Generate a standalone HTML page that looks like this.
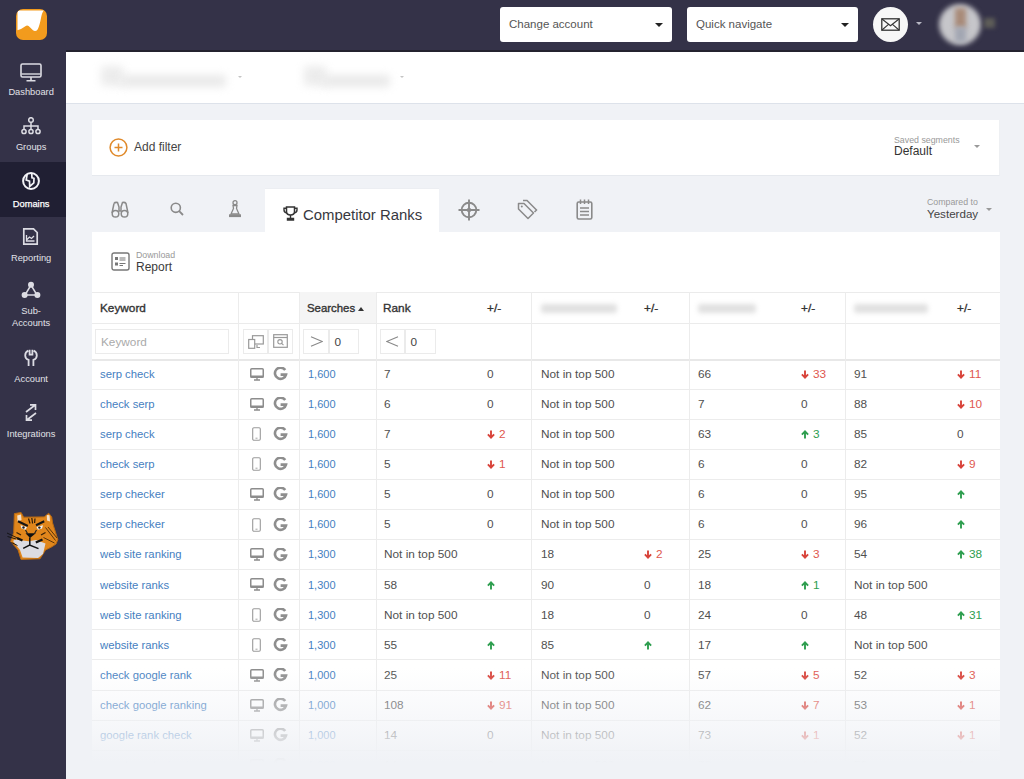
<!DOCTYPE html>
<html><head><meta charset="utf-8">
<style>
*{box-sizing:border-box;margin:0;padding:0}
html,body{width:1024px;height:779px;overflow:hidden}
body{position:relative;background:#f0f2f6;font-family:"Liberation Sans",sans-serif;color:#444}
.abs{position:absolute}
#hdr{position:absolute;left:0;top:0;width:1024px;height:52px;background:#343248}
#side{position:absolute;left:0;top:0;width:66px;height:779px;background:#343248}
.logo{position:absolute;left:16px;top:8.5px;width:30.5px;height:31px;border-radius:7px;background:#f29b1d;overflow:hidden}
.nav{position:absolute;left:0;width:66px;color:#e2e2e8;font-size:9px;text-align:center}
.nav .t{position:absolute;left:0;width:62.3px;font-size:9.3px;text-align:center;line-height:10px}
.nav svg{position:absolute}
.sel{position:absolute;top:7px;height:35px;background:#fff;border-radius:3px;color:#555;font-size:11.5px}
.sel .t{position:absolute;left:9px;top:10px;line-height:14px}
.caret{position:absolute;width:0;height:0;border-left:4px solid transparent;border-right:4px solid transparent;border-top:4px solid #222}
#topbar{position:absolute;left:66px;top:52px;width:958px;height:52px;background:#fff;border-bottom:1px solid #dde2ea}
.blur{position:absolute;background:#e6e6e6;filter:blur(4px);border-radius:3px}
.card{position:absolute;background:#fff}
.tabic{position:absolute}
.c{position:absolute;top:6.4px;font-size:11.8px;line-height:16px;white-space:nowrap;color:#505050}
.kw{color:#4580bf;font-size:11.3px}
.sr{color:#4580bf;font-size:11px}
.dn .pmn{color:#e0584f}
.upc .pmn{color:#2e9e4f}
.c .ar{position:relative;top:0px;margin-right:4px;vertical-align:-1px}
.row{position:absolute;left:92px;width:908px;height:30.1px;border-bottom:1px solid #ececec}
.row .c,.row .ic{margin-left:-92px}
.ic{position:absolute}
.vb{position:absolute;top:292px;width:1px;height:500px;background:#ececec}
.th{position:absolute;top:300px;font-size:11.8px;font-weight:normal;-webkit-text-stroke:0.35px #333;color:#333;line-height:16px}
.inp{position:absolute;top:329px;height:25px;border:1px solid #ebebeb;background:#fff}
#fade{position:absolute;left:66px;top:660px;width:958px;height:119px;background:linear-gradient(to bottom,rgba(240,242,246,0) 0px,rgba(240,242,246,0) 8px,rgba(240,242,246,0.38) 45px,rgba(240,242,246,0.7) 75px,rgba(240,242,246,0.95) 96px,rgba(240,242,246,1) 103px)}
</style></head><body>

<div id="hdr"></div>
<div id="side">
  <div class="logo">
    <svg width="31" height="32" viewBox="0 0 31 32"><path d="M1.5 3.5Q1.5 1.5 3.5 1.5H27.8Q26.2 3 25.2 8Q23.8 16 21.8 20.2Q19.6 23.2 17 21.3Q14.6 18.8 12.6 17Q11 16 9 17.5Q5 20.5 1.5 21.2Z" fill="#fff"/></svg>
  </div>
  <!-- Dashboard -->
  <div class="nav" style="top:52px;height:55px">
    <svg style="left:20px;top:11px" width="22" height="19" viewBox="0 0 22 19"><rect x="1" y="1" width="20" height="13" rx="1.5" fill="none" stroke="#dcdce3" stroke-width="1.6"/><path d="M1.5 11H20.5" stroke="#dcdce3" stroke-width="1.4"/><path d="M11 14V17.5M6.5 17.8H15.5" stroke="#dcdce3" stroke-width="1.6"/></svg>
    <div class="t" style="top:35px">Dashboard</div>
  </div>
  <!-- Groups -->
  <div class="nav" style="top:107px;height:55px">
    <svg style="left:21px;top:10px" width="20" height="18" viewBox="0 0 20 18"><circle cx="10" cy="3" r="2.3" fill="none" stroke="#dcdce3" stroke-width="1.5"/><path d="M10 5.3V9M3 12.5V9H17V12.5M10 9V12.5" fill="none" stroke="#dcdce3" stroke-width="1.5"/><circle cx="3" cy="14.5" r="2.1" fill="none" stroke="#dcdce3" stroke-width="1.5"/><circle cx="10" cy="14.5" r="2.1" fill="none" stroke="#dcdce3" stroke-width="1.5"/><circle cx="17" cy="14.5" r="2.1" fill="none" stroke="#dcdce3" stroke-width="1.5"/></svg>
    <div class="t" style="top:35px">Groups</div>
  </div>
  <!-- Domains active -->
  <div class="nav" style="top:162px;height:55px;background:#201f33;color:#fff">
    <svg style="left:21px;top:9.2px" width="20" height="20" viewBox="0 0 20 20"><circle cx="10" cy="10" r="7.9" fill="none" stroke="#f4f4f8" stroke-width="2"/><path d="M6.2 2.8L5.2 9L8.5 10.2L8.7 15.5L12.8 11.8L13 7.3L11 6.8L10.7 2.5" fill="none" stroke="#f4f4f8" stroke-width="1.7" stroke-linejoin="miter"/></svg>
    <div class="t" style="top:37px;-webkit-text-stroke:0.25px #fff">Domains</div>
  </div>
  <!-- Reporting -->
  <div class="nav" style="top:217px;height:55px">
    <svg style="left:22px;top:10px" width="17" height="19" viewBox="0 0 17 19"><path d="M1.8 1.8H11.5L15.2 5.5V17.2H1.8Z" fill="none" stroke="#dcdce3" stroke-width="1.7"/><path d="M4.5 8V14H12.5M5 12.5L7.5 10L9.5 11.5L12 9" fill="none" stroke="#dcdce3" stroke-width="1.3"/></svg>
    <div class="t" style="top:35.5px">Reporting</div>
  </div>
  <!-- Sub-Accounts -->
  <div class="nav" style="top:272px;height:67px">
    <svg style="left:21px;top:9px" width="20" height="18" viewBox="0 0 20 18"><path d="M10 4L4 14H16Z" fill="none" stroke="#dcdce3" stroke-width="1.5"/><circle cx="10" cy="3.8" r="3" fill="#dcdce3"/><circle cx="3.6" cy="14" r="3" fill="#dcdce3"/><circle cx="16.4" cy="14" r="3" fill="#dcdce3"/></svg>
    <div class="t" style="top:34px">Sub-</div>
    <div class="t" style="top:46px">Accounts</div>
  </div>
  <!-- Account -->
  <div class="nav" style="top:339px;height:55px">
    <svg style="left:24px;top:10px" width="14" height="18" viewBox="0 0 14 18"><path d="M4.3 1.6Q1.2 3 1.2 6.5Q1.2 9.8 4.6 10.9V17M9.7 1.6Q12.8 3 12.8 6.5Q12.8 9.8 9.4 10.9V17M5.6 0.8V5.6H8.4V0.8" fill="none" stroke="#dcdce3" stroke-width="1.8"/></svg>
    <div class="t" style="top:34.5px">Account</div>
  </div>
  <!-- Integrations -->
  <div class="nav" style="top:394px;height:55px">
    <svg style="left:22px;top:9px" width="18" height="19" viewBox="0 0 18 19"><path d="M4 9L13.5 1.8M8 1.8H13.5V7M14 10L4.5 17.2M10 17.2H4.5V12" fill="none" stroke="#dcdce3" stroke-width="1.7"/></svg>
    <div class="t" style="top:34.5px">Integrations</div>
  </div>
  <!-- tiger -->
  <svg style="position:absolute;left:4px;top:508px" width="58" height="58" viewBox="0 0 58 58">
    <path d="M10.4 5.6L17.1 4.5L19.7 9.2L40.2 8.9L44.7 5.2L47.7 8.9L48.6 15L53.8 31.5L52 36L47.5 39L41.5 42L36 50.8L17 51.4L14.1 42L6.7 33.5L9.7 24.6Z" fill="#e0861c" stroke="#b96a12" stroke-width="1"/>
    <path d="M11 31.5L24.6 33.2L32 32L41.5 35.5L39 46L34 50L18.6 49.5L16 42L9 33Z" fill="#dcdce2"/>
    <path d="M13.2 7.5L17 6.5L17.5 12L13.6 13.5Z" fill="#f4e2cc"/>
    <path d="M42.8 7L45.5 7.2L46 13.5L43 12.5Z" fill="#f4e2cc"/>
    <path d="M14 13.3L23.8 17.9M32 17.3L40.2 13.3" stroke="#151515" stroke-width="2.2"/>
    <path d="M16.5 17.2L23 19L21.5 21.8L17.5 20.5Z M39 17.2L32.5 19L34 21.8L38 20.5Z" fill="#f2f2f2"/>
    <circle cx="19.5" cy="19.5" r="1.2" fill="#222"/><circle cx="35.4" cy="19.6" r="1.2" fill="#222"/>
    <path d="M24.5 10.5L26 15.5M27.8 10L28.6 15.5M31 10.5L30.6 15" stroke="#2a1a0a" stroke-width="1.2"/>
    <path d="M21.5 25.3L31.8 25.3L26 30Z" fill="#111"/>
    <path d="M21.5 22L23.5 25.5M32.5 22L30.5 25.5" stroke="#222" stroke-width="1.2"/>
    <path d="M25.8 29.5V37.2M19.2 40.3L25.6 37L34.5 40.6" fill="none" stroke="#111" stroke-width="1.5"/>
    <path d="M13 30L18.5 32.5M31.8 34.5L38.5 31.5" stroke="#111" stroke-width="2.4"/>
    <path d="M3 25L13 29.8M3.5 28.5L12 31M7.5 34.5L13.5 37.5" stroke="#111" stroke-width="0.9"/>
    <path d="M41.5 19.5L51.5 32.5M44 19L53 30M39.5 29.5L50.5 35" stroke="#4a2a0a" stroke-width="0.9"/>
    <path d="M12.5 24.5L17 27M37 27L41.5 24.5" stroke="#3a2208" stroke-width="1.3"/>
  </svg>
</div>

<!-- header right -->
<div class="sel" style="left:500px;width:172px"><span class="t">Change account</span><span class="caret" style="left:155px;top:16px"></span></div>
<div class="sel" style="left:687px;width:171px"><span class="t">Quick navigate</span><span class="caret" style="left:154px;top:16px"></span></div>
<div class="abs" style="left:872.5px;top:6.5px;width:35px;height:35px;border-radius:50%;background:#f7f7f7"></div>
<svg class="abs" style="left:881px;top:18px" width="19" height="13" viewBox="0 0 19 13"><rect x="0.8" y="0.8" width="17.4" height="11.4" fill="none" stroke="#333" stroke-width="1.3"/><path d="M1 1L9.5 7.8L18 1M1 12L7.2 6.6M18 12L11.8 6.6" fill="none" stroke="#333" stroke-width="1.1"/></svg>
<span class="caret" style="left:916px;top:22px;border-top-color:#b8b8c4;border-left-width:3px;border-right-width:3px;border-top-width:3.5px"></span>
<div class="abs" style="left:939px;top:4px;width:42px;height:41px;border-radius:50%;background:#c6c6ca;filter:blur(2.8px)"></div>
<div class="abs" style="left:955px;top:8px;width:11px;height:20px;background:#a88a78;filter:blur(2.5px)"></div>
<div class="abs" style="left:955px;top:27px;width:11px;height:15px;background:#a2a6b2;filter:blur(2.5px)"></div>
<div class="abs" style="left:984px;top:18px;width:11px;height:10px;background:#5e5d58;filter:blur(2.2px)"></div>
<div class="abs" style="left:66px;top:50px;width:958px;height:2px;background:#24232f"></div>
<!-- top white bar -->
<div id="topbar"></div>
<div class="blur" style="left:101px;top:66px;width:22px;height:20px;background:#ececec"></div>
<div class="blur" style="left:120px;top:75px;width:106px;height:12px;background:#e9e9e9"></div>
<span class="caret" style="left:238px;top:76px;border-top-color:#c4c4c4;border-left-width:2.5px;border-right-width:2.5px;border-top-width:2.5px"></span>
<div class="blur" style="left:304px;top:66px;width:22px;height:20px;background:#ececec"></div>
<div class="blur" style="left:322px;top:75px;width:68px;height:12px;background:#e9e9e9"></div>
<span class="caret" style="left:400px;top:76px;border-top-color:#c4c4c4;border-left-width:2.5px;border-right-width:2.5px;border-top-width:2.5px"></span>

<!-- filter card -->
<div class="card" style="left:92px;top:120px;width:907.5px;height:56px;border-bottom:1px solid #e6e9ee;border-right:1px solid #eef0f3"></div>
<svg class="abs" style="left:109px;top:138px" width="19" height="19" viewBox="0 0 19 19"><circle cx="9.5" cy="9.5" r="8.4" fill="none" stroke="#e08a2b" stroke-width="1.5"/><path d="M9.5 5.5V13.5M5.5 9.5H13.5" stroke="#e08a2b" stroke-width="1.5"/></svg>
<span class="abs" style="left:134px;top:140px;font-size:12px;color:#444;line-height:14px">Add filter</span>
<span class="abs" style="left:894px;top:135px;font-size:8.8px;color:#999;line-height:10px">Saved segments</span>
<span class="abs" style="left:894px;top:144px;font-size:12px;color:#333;line-height:14px">Default</span>
<span class="caret" style="left:974px;top:145px;border-top-color:#999;border-left-width:3.5px;border-right-width:3.5px;border-top-width:3.5px"></span>

<!-- tabs -->
<svg class="tabic" style="left:111px;top:201px" width="18" height="17" viewBox="0 0 18 17"><path d="M3 2.5Q4 1 6.5 1.5L8 6V10H10V6L11.5 1.5Q14 1 15 2.5L17 12" fill="none" stroke="#8a8a8a" stroke-width="1.5"/><path d="M1 12L3 2.5" stroke="#8a8a8a" stroke-width="1.5"/><circle cx="4.5" cy="12.8" r="3.3" fill="none" stroke="#8a8a8a" stroke-width="1.5"/><circle cx="13.5" cy="12.8" r="3.3" fill="none" stroke="#8a8a8a" stroke-width="1.5"/></svg>
<svg class="tabic" style="left:170px;top:202px" width="14" height="14" viewBox="0 0 14 14"><circle cx="5.8" cy="5.8" r="4.6" fill="none" stroke="#8a8a8a" stroke-width="1.6"/><path d="M9.2 9.2L13 13" stroke="#8a8a8a" stroke-width="1.8"/></svg>
<svg class="tabic" style="left:228px;top:200px" width="14" height="18" viewBox="0 0 14 18"><circle cx="7" cy="2.7" r="2" fill="none" stroke="#8a8a8a" stroke-width="1.3"/><path d="M5 5.5H9L8.5 8.5L11 14H3L5.5 8.5Z" fill="none" stroke="#8a8a8a" stroke-width="1.3"/><rect x="1" y="14.3" width="12" height="2.8" fill="#8a8a8a"/></svg>
<div class="card" style="left:265px;top:188px;width:174px;height:50px;border-top:1px solid #eceef2"></div>
<svg class="abs" style="left:283px;top:206px" width="15" height="15" viewBox="0 0 15 15"><path d="M3.5 1H11.5V5.5Q11.5 9 7.5 9Q3.5 9 3.5 5.5Z" fill="none" stroke="#333" stroke-width="1.5"/><path d="M3.5 2.2H1V4Q1 6.5 4 7M11.5 2.2H14V4Q14 6.5 11 7M7.5 9V12M4.5 14H10.5V12.5H4.5Z" fill="none" stroke="#333" stroke-width="1.4"/></svg>
<span class="abs" style="left:303px;top:206.5px;font-size:14.9px;color:#383840;line-height:17px">Competitor Ranks</span>
<svg class="tabic" style="left:458px;top:199px" width="22" height="22" viewBox="0 0 22 22"><circle cx="11" cy="11" r="7.3" fill="none" stroke="#8a8a8a" stroke-width="1.9"/><path d="M11 0.5V21.5M0.5 11H21.5" stroke="#8a8a8a" stroke-width="1.9"/><circle cx="11" cy="11" r="2.2" fill="#8a8a8a"/></svg>
<svg class="tabic" style="left:517px;top:199px" width="21" height="22" viewBox="0 0 21 22"><path d="M1.5 4.5V10L11 19.5L16.5 14L7 4.5Z" fill="none" stroke="#8a8a8a" stroke-width="1.5" stroke-linejoin="round"/><circle cx="4.8" cy="7.6" r="1" fill="#8a8a8a"/><path d="M6 1.5H10L19.5 11L17.5 13" fill="none" stroke="#8a8a8a" stroke-width="1.5"/></svg>
<svg class="tabic" style="left:576px;top:199px" width="17" height="21" viewBox="0 0 17 21"><rect x="1.2" y="3" width="14.6" height="17" rx="1.5" fill="none" stroke="#8a8a8a" stroke-width="1.6"/><path d="M4.5 0.5V5M8.5 0.5V5M12.5 0.5V5M4 9H13M4 12.5H13M4 16H13" stroke="#8a8a8a" stroke-width="1.5"/></svg>
<span class="abs" style="left:927px;top:197px;font-size:8.8px;color:#999;line-height:10px">Compared to</span>
<span class="abs" style="left:927px;top:207px;font-size:11.6px;color:#444;line-height:14px">Yesterday</span>
<span class="caret" style="left:986px;top:208px;border-top-color:#999;border-left-width:3.5px;border-right-width:3.5px;border-top-width:3.5px"></span>

<!-- main card -->
<div class="card" style="left:92px;top:232px;width:908px;height:600px"></div>
<svg class="abs" style="left:111px;top:252px" width="19" height="19" viewBox="0 0 19 19"><rect x="1" y="1" width="17" height="17" rx="2" fill="none" stroke="#777" stroke-width="1.4"/><rect x="4" y="5" width="3" height="3" fill="#777"/><rect x="4" y="10.5" width="3" height="3" fill="#777"/><path d="M8.5 6H14.5M8.5 8H14.5M8.5 11.5H14.5M8.5 13.5H12" stroke="#777" stroke-width="1.2"/></svg>
<span class="abs" style="left:136px;top:250px;font-size:8.8px;color:#999;line-height:10px">Download</span>
<span class="abs" style="left:136px;top:260px;font-size:12px;color:#3b3b3b;line-height:14px">Report</span>

<!-- table header -->
<div class="abs" style="left:92px;top:291.5px;width:908px;height:1px;background:#ebebeb"></div>
<div class="abs" style="left:299px;top:292px;width:76.5px;height:31px;background:#f5f5f5"></div>
<div class="abs" style="left:92px;top:323px;width:908px;height:1px;background:#ebebeb"></div>
<div class="abs" style="left:92px;top:359px;width:908px;height:2px;background:#e8e8e8"></div>
<div class="vb" style="left:238px"></div><div class="vb" style="left:298.5px"></div><div class="vb" style="left:375.5px"></div><div class="vb" style="left:531px"></div><div class="vb" style="left:689px"></div><div class="vb" style="left:845px"></div>
<span class="th" style="left:100px">Keyword</span>
<span class="th" style="left:307px;font-size:11.4px">Searches</span>
<span class="caret" style="left:358px;top:307px;border-top:none;border-bottom:4px solid #333;border-left-width:3.5px;border-right-width:3.5px"></span>
<span class="th" style="left:383px">Rank</span>
<span class="th" style="left:487px">+/-</span>
<div class="blur" style="left:541px;top:304px;width:76px;height:9px;background:#e0e0e0;filter:blur(2.8px)"></div>
<span class="th" style="left:644px">+/-</span>
<div class="blur" style="left:698px;top:304px;width:58px;height:9px;background:#e0e0e0;filter:blur(2.8px)"></div>
<span class="th" style="left:801px">+/-</span>
<div class="blur" style="left:854px;top:304px;width:74px;height:9px;background:#e0e0e0;filter:blur(2.8px)"></div>
<span class="th" style="left:957px">+/-</span>

<!-- filter inputs -->
<div class="inp" style="left:95px;width:134px"><span class="abs" style="left:5px;top:4px;font-size:11.8px;color:#aaa;line-height:16px">Keyword</span></div>
<div class="inp" style="left:243px;width:25px"></div>
<div class="inp" style="left:268px;width:25px"></div>
<svg class="abs" style="left:248px;top:335px" width="16" height="14" viewBox="0 0 16 14"><rect x="4.5" y="0.7" width="10.8" height="8.3" fill="none" stroke="#999" stroke-width="1.2"/><rect x="0.7" y="4.5" width="6" height="8.8" fill="#fff" stroke="#999" stroke-width="1.2"/><path d="M9 10V12.5H12" stroke="#999" stroke-width="1.2" fill="none"/></svg>
<svg class="abs" style="left:273px;top:334px" width="15" height="14" viewBox="0 0 15 14"><rect x="0.7" y="0.7" width="13.6" height="12.6" fill="none" stroke="#999" stroke-width="1.2"/><path d="M0.7 3.5H14.3" stroke="#999" stroke-width="1.2"/><circle cx="7" cy="7.8" r="2.2" fill="none" stroke="#999" stroke-width="1.1"/><path d="M8.6 9.4L10.5 11.2" stroke="#999" stroke-width="1.1"/></svg>
<div class="inp" style="left:303px;width:26px"></div>
<div class="inp" style="left:328.5px;width:30.5px"><span class="abs" style="left:5px;top:4px;font-size:11.8px;color:#444;line-height:16px">0</span></div>
<svg class="abs" style="left:309.5px;top:336px" width="13" height="11" viewBox="0 0 13 11"><path d="M1 0.8L12.3 5.5L1 10.2" fill="none" stroke="#888" stroke-width="1.1"/></svg>
<div class="inp" style="left:380px;width:25px"></div>
<div class="inp" style="left:404.5px;width:31px"><span class="abs" style="left:5px;top:4px;font-size:11.8px;color:#444;line-height:16px">0</span></div>
<svg class="abs" style="left:386px;top:336px" width="13" height="11" viewBox="0 0 13 11"><path d="M12 0.8L0.7 5.5L12 10.2" fill="none" stroke="#888" stroke-width="1.1"/></svg>

<div class="row" style="top:359.50px"><span class="c kw" style="left:100px">serp check</span><span class="ic" style="left:250px;top:7px"><svg width="14" height="13" viewBox="0 0 14 13"><rect x="0.75" y="0.75" width="12.5" height="8.5" rx="1" fill="none" stroke="#8c8c8c" stroke-width="1.5"/><rect x="0.5" y="7.5" width="13" height="2.2" fill="#8c8c8c"/><path d="M7 9.5V11.6M4 12H10" stroke="#8c8c8c" stroke-width="1.3"/></svg></span><span class="ic" style="left:273px;top:7.5px"><svg width="15" height="14" viewBox="0 0 15 14"><path d="M12.2 3.1A5.6 5.6 0 1 0 13 7.6H7.6" fill="none" stroke="#8e8e8e" stroke-width="2.6"/></svg></span><span class="c sr" style="left:308px">1,600</span><span class="c" style="left:384px">7</span><span class="c" style="left:487px">0</span><span class="c" style="left:541px">Not in top 500</span><span class="c" style="left:698px">66</span><span class="c dn" style="left:801px"><svg class="ar" width="8" height="9" viewBox="0 0 8 9"><path d="M4 0.5V7.5M0.9 4.4L4 7.6L7.1 4.4" fill="none" stroke="#d8433a" stroke-width="1.9"/></svg><span class="pmn">33</span></span><span class="c" style="left:854px">91</span><span class="c dn" style="left:957px"><svg class="ar" width="8" height="9" viewBox="0 0 8 9"><path d="M4 0.5V7.5M0.9 4.4L4 7.6L7.1 4.4" fill="none" stroke="#d8433a" stroke-width="1.9"/></svg><span class="pmn">11</span></span></div>
<div class="row" style="top:389.60px"><span class="c kw" style="left:100px">check serp</span><span class="ic" style="left:250px;top:7px"><svg width="14" height="13" viewBox="0 0 14 13"><rect x="0.75" y="0.75" width="12.5" height="8.5" rx="1" fill="none" stroke="#8c8c8c" stroke-width="1.5"/><rect x="0.5" y="7.5" width="13" height="2.2" fill="#8c8c8c"/><path d="M7 9.5V11.6M4 12H10" stroke="#8c8c8c" stroke-width="1.3"/></svg></span><span class="ic" style="left:273px;top:7.5px"><svg width="15" height="14" viewBox="0 0 15 14"><path d="M12.2 3.1A5.6 5.6 0 1 0 13 7.6H7.6" fill="none" stroke="#8e8e8e" stroke-width="2.6"/></svg></span><span class="c sr" style="left:308px">1,600</span><span class="c" style="left:384px">6</span><span class="c" style="left:487px">0</span><span class="c" style="left:541px">Not in top 500</span><span class="c" style="left:698px">7</span><span class="c" style="left:801px">0</span><span class="c" style="left:854px">88</span><span class="c dn" style="left:957px"><svg class="ar" width="8" height="9" viewBox="0 0 8 9"><path d="M4 0.5V7.5M0.9 4.4L4 7.6L7.1 4.4" fill="none" stroke="#d8433a" stroke-width="1.9"/></svg><span class="pmn">10</span></span></div>
<div class="row" style="top:419.70px"><span class="c kw" style="left:100px">serp check</span><span class="ic" style="left:252px;top:7.5px"><svg width="9" height="14" viewBox="0 0 9 14"><rect x="0.7" y="0.7" width="7.6" height="12.6" rx="1.2" fill="none" stroke="#9a9a9a" stroke-width="1.1"/><path d="M3.5 11.2H5.5" stroke="#9a9a9a" stroke-width="0.9"/></svg></span><span class="ic" style="left:273px;top:7.5px"><svg width="15" height="14" viewBox="0 0 15 14"><path d="M12.2 3.1A5.6 5.6 0 1 0 13 7.6H7.6" fill="none" stroke="#8e8e8e" stroke-width="2.6"/></svg></span><span class="c sr" style="left:308px">1,600</span><span class="c" style="left:384px">7</span><span class="c dn" style="left:487px"><svg class="ar" width="8" height="9" viewBox="0 0 8 9"><path d="M4 0.5V7.5M0.9 4.4L4 7.6L7.1 4.4" fill="none" stroke="#d8433a" stroke-width="1.9"/></svg><span class="pmn">2</span></span><span class="c" style="left:541px">Not in top 500</span><span class="c" style="left:698px">63</span><span class="c upc" style="left:801px"><svg class="ar" width="8" height="9" viewBox="0 0 8 9"><path d="M4 8.5V1.5M0.9 4.6L4 1.4L7.1 4.6" fill="none" stroke="#2e9e4f" stroke-width="1.9"/></svg><span class="pmn">3</span></span><span class="c" style="left:854px">85</span><span class="c" style="left:957px">0</span></div>
<div class="row" style="top:449.80px"><span class="c kw" style="left:100px">check serp</span><span class="ic" style="left:252px;top:7.5px"><svg width="9" height="14" viewBox="0 0 9 14"><rect x="0.7" y="0.7" width="7.6" height="12.6" rx="1.2" fill="none" stroke="#9a9a9a" stroke-width="1.1"/><path d="M3.5 11.2H5.5" stroke="#9a9a9a" stroke-width="0.9"/></svg></span><span class="ic" style="left:273px;top:7.5px"><svg width="15" height="14" viewBox="0 0 15 14"><path d="M12.2 3.1A5.6 5.6 0 1 0 13 7.6H7.6" fill="none" stroke="#8e8e8e" stroke-width="2.6"/></svg></span><span class="c sr" style="left:308px">1,600</span><span class="c" style="left:384px">5</span><span class="c dn" style="left:487px"><svg class="ar" width="8" height="9" viewBox="0 0 8 9"><path d="M4 0.5V7.5M0.9 4.4L4 7.6L7.1 4.4" fill="none" stroke="#d8433a" stroke-width="1.9"/></svg><span class="pmn">1</span></span><span class="c" style="left:541px">Not in top 500</span><span class="c" style="left:698px">6</span><span class="c" style="left:801px">0</span><span class="c" style="left:854px">82</span><span class="c dn" style="left:957px"><svg class="ar" width="8" height="9" viewBox="0 0 8 9"><path d="M4 0.5V7.5M0.9 4.4L4 7.6L7.1 4.4" fill="none" stroke="#d8433a" stroke-width="1.9"/></svg><span class="pmn">9</span></span></div>
<div class="row" style="top:479.90px"><span class="c kw" style="left:100px">serp checker</span><span class="ic" style="left:250px;top:7px"><svg width="14" height="13" viewBox="0 0 14 13"><rect x="0.75" y="0.75" width="12.5" height="8.5" rx="1" fill="none" stroke="#8c8c8c" stroke-width="1.5"/><rect x="0.5" y="7.5" width="13" height="2.2" fill="#8c8c8c"/><path d="M7 9.5V11.6M4 12H10" stroke="#8c8c8c" stroke-width="1.3"/></svg></span><span class="ic" style="left:273px;top:7.5px"><svg width="15" height="14" viewBox="0 0 15 14"><path d="M12.2 3.1A5.6 5.6 0 1 0 13 7.6H7.6" fill="none" stroke="#8e8e8e" stroke-width="2.6"/></svg></span><span class="c sr" style="left:308px">1,600</span><span class="c" style="left:384px">5</span><span class="c" style="left:487px">0</span><span class="c" style="left:541px">Not in top 500</span><span class="c" style="left:698px">6</span><span class="c" style="left:801px">0</span><span class="c" style="left:854px">95</span><span class="c upc" style="left:957px"><svg class="ar" width="8" height="9" viewBox="0 0 8 9"><path d="M4 8.5V1.5M0.9 4.6L4 1.4L7.1 4.6" fill="none" stroke="#2e9e4f" stroke-width="1.9"/></svg></span></div>
<div class="row" style="top:510.00px"><span class="c kw" style="left:100px">serp checker</span><span class="ic" style="left:252px;top:7.5px"><svg width="9" height="14" viewBox="0 0 9 14"><rect x="0.7" y="0.7" width="7.6" height="12.6" rx="1.2" fill="none" stroke="#9a9a9a" stroke-width="1.1"/><path d="M3.5 11.2H5.5" stroke="#9a9a9a" stroke-width="0.9"/></svg></span><span class="ic" style="left:273px;top:7.5px"><svg width="15" height="14" viewBox="0 0 15 14"><path d="M12.2 3.1A5.6 5.6 0 1 0 13 7.6H7.6" fill="none" stroke="#8e8e8e" stroke-width="2.6"/></svg></span><span class="c sr" style="left:308px">1,600</span><span class="c" style="left:384px">5</span><span class="c" style="left:487px">0</span><span class="c" style="left:541px">Not in top 500</span><span class="c" style="left:698px">6</span><span class="c" style="left:801px">0</span><span class="c" style="left:854px">96</span><span class="c upc" style="left:957px"><svg class="ar" width="8" height="9" viewBox="0 0 8 9"><path d="M4 8.5V1.5M0.9 4.6L4 1.4L7.1 4.6" fill="none" stroke="#2e9e4f" stroke-width="1.9"/></svg></span></div>
<div class="row" style="top:540.10px"><span class="c kw" style="left:100px">web site ranking</span><span class="ic" style="left:250px;top:7px"><svg width="14" height="13" viewBox="0 0 14 13"><rect x="0.75" y="0.75" width="12.5" height="8.5" rx="1" fill="none" stroke="#8c8c8c" stroke-width="1.5"/><rect x="0.5" y="7.5" width="13" height="2.2" fill="#8c8c8c"/><path d="M7 9.5V11.6M4 12H10" stroke="#8c8c8c" stroke-width="1.3"/></svg></span><span class="ic" style="left:273px;top:7.5px"><svg width="15" height="14" viewBox="0 0 15 14"><path d="M12.2 3.1A5.6 5.6 0 1 0 13 7.6H7.6" fill="none" stroke="#8e8e8e" stroke-width="2.6"/></svg></span><span class="c sr" style="left:308px">1,300</span><span class="c" style="left:384px">Not in top 500</span><span class="c" style="left:541px">18</span><span class="c dn" style="left:644px"><svg class="ar" width="8" height="9" viewBox="0 0 8 9"><path d="M4 0.5V7.5M0.9 4.4L4 7.6L7.1 4.4" fill="none" stroke="#d8433a" stroke-width="1.9"/></svg><span class="pmn">2</span></span><span class="c" style="left:698px">25</span><span class="c dn" style="left:801px"><svg class="ar" width="8" height="9" viewBox="0 0 8 9"><path d="M4 0.5V7.5M0.9 4.4L4 7.6L7.1 4.4" fill="none" stroke="#d8433a" stroke-width="1.9"/></svg><span class="pmn">3</span></span><span class="c" style="left:854px">54</span><span class="c upc" style="left:957px"><svg class="ar" width="8" height="9" viewBox="0 0 8 9"><path d="M4 8.5V1.5M0.9 4.6L4 1.4L7.1 4.6" fill="none" stroke="#2e9e4f" stroke-width="1.9"/></svg><span class="pmn">38</span></span></div>
<div class="row" style="top:570.20px"><span class="c kw" style="left:100px">website ranks</span><span class="ic" style="left:250px;top:7px"><svg width="14" height="13" viewBox="0 0 14 13"><rect x="0.75" y="0.75" width="12.5" height="8.5" rx="1" fill="none" stroke="#8c8c8c" stroke-width="1.5"/><rect x="0.5" y="7.5" width="13" height="2.2" fill="#8c8c8c"/><path d="M7 9.5V11.6M4 12H10" stroke="#8c8c8c" stroke-width="1.3"/></svg></span><span class="ic" style="left:273px;top:7.5px"><svg width="15" height="14" viewBox="0 0 15 14"><path d="M12.2 3.1A5.6 5.6 0 1 0 13 7.6H7.6" fill="none" stroke="#8e8e8e" stroke-width="2.6"/></svg></span><span class="c sr" style="left:308px">1,300</span><span class="c" style="left:384px">58</span><span class="c upc" style="left:487px"><svg class="ar" width="8" height="9" viewBox="0 0 8 9"><path d="M4 8.5V1.5M0.9 4.6L4 1.4L7.1 4.6" fill="none" stroke="#2e9e4f" stroke-width="1.9"/></svg></span><span class="c" style="left:541px">90</span><span class="c" style="left:644px">0</span><span class="c" style="left:698px">18</span><span class="c upc" style="left:801px"><svg class="ar" width="8" height="9" viewBox="0 0 8 9"><path d="M4 8.5V1.5M0.9 4.6L4 1.4L7.1 4.6" fill="none" stroke="#2e9e4f" stroke-width="1.9"/></svg><span class="pmn">1</span></span><span class="c" style="left:854px">Not in top 500</span></div>
<div class="row" style="top:600.30px"><span class="c kw" style="left:100px">web site ranking</span><span class="ic" style="left:252px;top:7.5px"><svg width="9" height="14" viewBox="0 0 9 14"><rect x="0.7" y="0.7" width="7.6" height="12.6" rx="1.2" fill="none" stroke="#9a9a9a" stroke-width="1.1"/><path d="M3.5 11.2H5.5" stroke="#9a9a9a" stroke-width="0.9"/></svg></span><span class="ic" style="left:273px;top:7.5px"><svg width="15" height="14" viewBox="0 0 15 14"><path d="M12.2 3.1A5.6 5.6 0 1 0 13 7.6H7.6" fill="none" stroke="#8e8e8e" stroke-width="2.6"/></svg></span><span class="c sr" style="left:308px">1,300</span><span class="c" style="left:384px">Not in top 500</span><span class="c" style="left:541px">18</span><span class="c" style="left:644px">0</span><span class="c" style="left:698px">24</span><span class="c" style="left:801px">0</span><span class="c" style="left:854px">48</span><span class="c upc" style="left:957px"><svg class="ar" width="8" height="9" viewBox="0 0 8 9"><path d="M4 8.5V1.5M0.9 4.6L4 1.4L7.1 4.6" fill="none" stroke="#2e9e4f" stroke-width="1.9"/></svg><span class="pmn">31</span></span></div>
<div class="row" style="top:630.40px"><span class="c kw" style="left:100px">website ranks</span><span class="ic" style="left:252px;top:7.5px"><svg width="9" height="14" viewBox="0 0 9 14"><rect x="0.7" y="0.7" width="7.6" height="12.6" rx="1.2" fill="none" stroke="#9a9a9a" stroke-width="1.1"/><path d="M3.5 11.2H5.5" stroke="#9a9a9a" stroke-width="0.9"/></svg></span><span class="ic" style="left:273px;top:7.5px"><svg width="15" height="14" viewBox="0 0 15 14"><path d="M12.2 3.1A5.6 5.6 0 1 0 13 7.6H7.6" fill="none" stroke="#8e8e8e" stroke-width="2.6"/></svg></span><span class="c sr" style="left:308px">1,300</span><span class="c" style="left:384px">55</span><span class="c upc" style="left:487px"><svg class="ar" width="8" height="9" viewBox="0 0 8 9"><path d="M4 8.5V1.5M0.9 4.6L4 1.4L7.1 4.6" fill="none" stroke="#2e9e4f" stroke-width="1.9"/></svg></span><span class="c" style="left:541px">85</span><span class="c upc" style="left:644px"><svg class="ar" width="8" height="9" viewBox="0 0 8 9"><path d="M4 8.5V1.5M0.9 4.6L4 1.4L7.1 4.6" fill="none" stroke="#2e9e4f" stroke-width="1.9"/></svg></span><span class="c" style="left:698px">17</span><span class="c upc" style="left:801px"><svg class="ar" width="8" height="9" viewBox="0 0 8 9"><path d="M4 8.5V1.5M0.9 4.6L4 1.4L7.1 4.6" fill="none" stroke="#2e9e4f" stroke-width="1.9"/></svg></span><span class="c" style="left:854px">Not in top 500</span></div>
<div class="row" style="top:660.50px"><span class="c kw" style="left:100px">check google rank</span><span class="ic" style="left:250px;top:7px"><svg width="14" height="13" viewBox="0 0 14 13"><rect x="0.75" y="0.75" width="12.5" height="8.5" rx="1" fill="none" stroke="#8c8c8c" stroke-width="1.5"/><rect x="0.5" y="7.5" width="13" height="2.2" fill="#8c8c8c"/><path d="M7 9.5V11.6M4 12H10" stroke="#8c8c8c" stroke-width="1.3"/></svg></span><span class="ic" style="left:273px;top:7.5px"><svg width="15" height="14" viewBox="0 0 15 14"><path d="M12.2 3.1A5.6 5.6 0 1 0 13 7.6H7.6" fill="none" stroke="#8e8e8e" stroke-width="2.6"/></svg></span><span class="c sr" style="left:308px">1,000</span><span class="c" style="left:384px">25</span><span class="c dn" style="left:487px"><svg class="ar" width="8" height="9" viewBox="0 0 8 9"><path d="M4 0.5V7.5M0.9 4.4L4 7.6L7.1 4.4" fill="none" stroke="#d8433a" stroke-width="1.9"/></svg><span class="pmn">11</span></span><span class="c" style="left:541px">Not in top 500</span><span class="c" style="left:698px">57</span><span class="c dn" style="left:801px"><svg class="ar" width="8" height="9" viewBox="0 0 8 9"><path d="M4 0.5V7.5M0.9 4.4L4 7.6L7.1 4.4" fill="none" stroke="#d8433a" stroke-width="1.9"/></svg><span class="pmn">5</span></span><span class="c" style="left:854px">52</span><span class="c dn" style="left:957px"><svg class="ar" width="8" height="9" viewBox="0 0 8 9"><path d="M4 0.5V7.5M0.9 4.4L4 7.6L7.1 4.4" fill="none" stroke="#d8433a" stroke-width="1.9"/></svg><span class="pmn">3</span></span></div>
<div class="row" style="top:690.60px"><span class="c kw" style="left:100px">check google ranking</span><span class="ic" style="left:250px;top:7px"><svg width="14" height="13" viewBox="0 0 14 13"><rect x="0.75" y="0.75" width="12.5" height="8.5" rx="1" fill="none" stroke="#8c8c8c" stroke-width="1.5"/><rect x="0.5" y="7.5" width="13" height="2.2" fill="#8c8c8c"/><path d="M7 9.5V11.6M4 12H10" stroke="#8c8c8c" stroke-width="1.3"/></svg></span><span class="ic" style="left:273px;top:7.5px"><svg width="15" height="14" viewBox="0 0 15 14"><path d="M12.2 3.1A5.6 5.6 0 1 0 13 7.6H7.6" fill="none" stroke="#8e8e8e" stroke-width="2.6"/></svg></span><span class="c sr" style="left:308px">1,000</span><span class="c" style="left:384px">108</span><span class="c dn" style="left:487px"><svg class="ar" width="8" height="9" viewBox="0 0 8 9"><path d="M4 0.5V7.5M0.9 4.4L4 7.6L7.1 4.4" fill="none" stroke="#d8433a" stroke-width="1.9"/></svg><span class="pmn">91</span></span><span class="c" style="left:541px">Not in top 500</span><span class="c" style="left:698px">62</span><span class="c dn" style="left:801px"><svg class="ar" width="8" height="9" viewBox="0 0 8 9"><path d="M4 0.5V7.5M0.9 4.4L4 7.6L7.1 4.4" fill="none" stroke="#d8433a" stroke-width="1.9"/></svg><span class="pmn">7</span></span><span class="c" style="left:854px">53</span><span class="c dn" style="left:957px"><svg class="ar" width="8" height="9" viewBox="0 0 8 9"><path d="M4 0.5V7.5M0.9 4.4L4 7.6L7.1 4.4" fill="none" stroke="#d8433a" stroke-width="1.9"/></svg><span class="pmn">1</span></span></div>
<div class="row" style="top:720.70px"><span class="c kw" style="left:100px">google rank check</span><span class="ic" style="left:250px;top:7px"><svg width="14" height="13" viewBox="0 0 14 13"><rect x="0.75" y="0.75" width="12.5" height="8.5" rx="1" fill="none" stroke="#8c8c8c" stroke-width="1.5"/><rect x="0.5" y="7.5" width="13" height="2.2" fill="#8c8c8c"/><path d="M7 9.5V11.6M4 12H10" stroke="#8c8c8c" stroke-width="1.3"/></svg></span><span class="ic" style="left:273px;top:7.5px"><svg width="15" height="14" viewBox="0 0 15 14"><path d="M12.2 3.1A5.6 5.6 0 1 0 13 7.6H7.6" fill="none" stroke="#8e8e8e" stroke-width="2.6"/></svg></span><span class="c sr" style="left:308px">1,000</span><span class="c" style="left:384px">14</span><span class="c" style="left:487px">0</span><span class="c" style="left:541px">Not in top 500</span><span class="c" style="left:698px">73</span><span class="c dn" style="left:801px"><svg class="ar" width="8" height="9" viewBox="0 0 8 9"><path d="M4 0.5V7.5M0.9 4.4L4 7.6L7.1 4.4" fill="none" stroke="#d8433a" stroke-width="1.9"/></svg><span class="pmn">1</span></span><span class="c" style="left:854px">52</span><span class="c dn" style="left:957px"><svg class="ar" width="8" height="9" viewBox="0 0 8 9"><path d="M4 0.5V7.5M0.9 4.4L4 7.6L7.1 4.4" fill="none" stroke="#d8433a" stroke-width="1.9"/></svg><span class="pmn">1</span></span></div>
<div class="row" style="top:750.80px"><span class="c kw" style="left:100px">google rank checker</span><span class="ic" style="left:250px;top:7px"><svg width="14" height="13" viewBox="0 0 14 13"><rect x="0.75" y="0.75" width="12.5" height="8.5" rx="1" fill="none" stroke="#8c8c8c" stroke-width="1.5"/><rect x="0.5" y="7.5" width="13" height="2.2" fill="#8c8c8c"/><path d="M7 9.5V11.6M4 12H10" stroke="#8c8c8c" stroke-width="1.3"/></svg></span><span class="ic" style="left:273px;top:7.5px"><svg width="15" height="14" viewBox="0 0 15 14"><path d="M12.2 3.1A5.6 5.6 0 1 0 13 7.6H7.6" fill="none" stroke="#8e8e8e" stroke-width="2.6"/></svg></span><span class="c sr" style="left:308px">1,000</span><span class="c" style="left:384px">14</span><span class="c" style="left:487px">0</span><span class="c" style="left:541px">Not in top 500</span><span class="c" style="left:698px">73</span><span class="c dn" style="left:801px"><svg class="ar" width="8" height="9" viewBox="0 0 8 9"><path d="M4 0.5V7.5M0.9 4.4L4 7.6L7.1 4.4" fill="none" stroke="#d8433a" stroke-width="1.9"/></svg><span class="pmn">1</span></span><span class="c" style="left:854px">52</span><span class="c dn" style="left:957px"><svg class="ar" width="8" height="9" viewBox="0 0 8 9"><path d="M4 0.5V7.5M0.9 4.4L4 7.6L7.1 4.4" fill="none" stroke="#d8433a" stroke-width="1.9"/></svg><span class="pmn">1</span></span></div>

<div id="fade"></div>
</body></html>
